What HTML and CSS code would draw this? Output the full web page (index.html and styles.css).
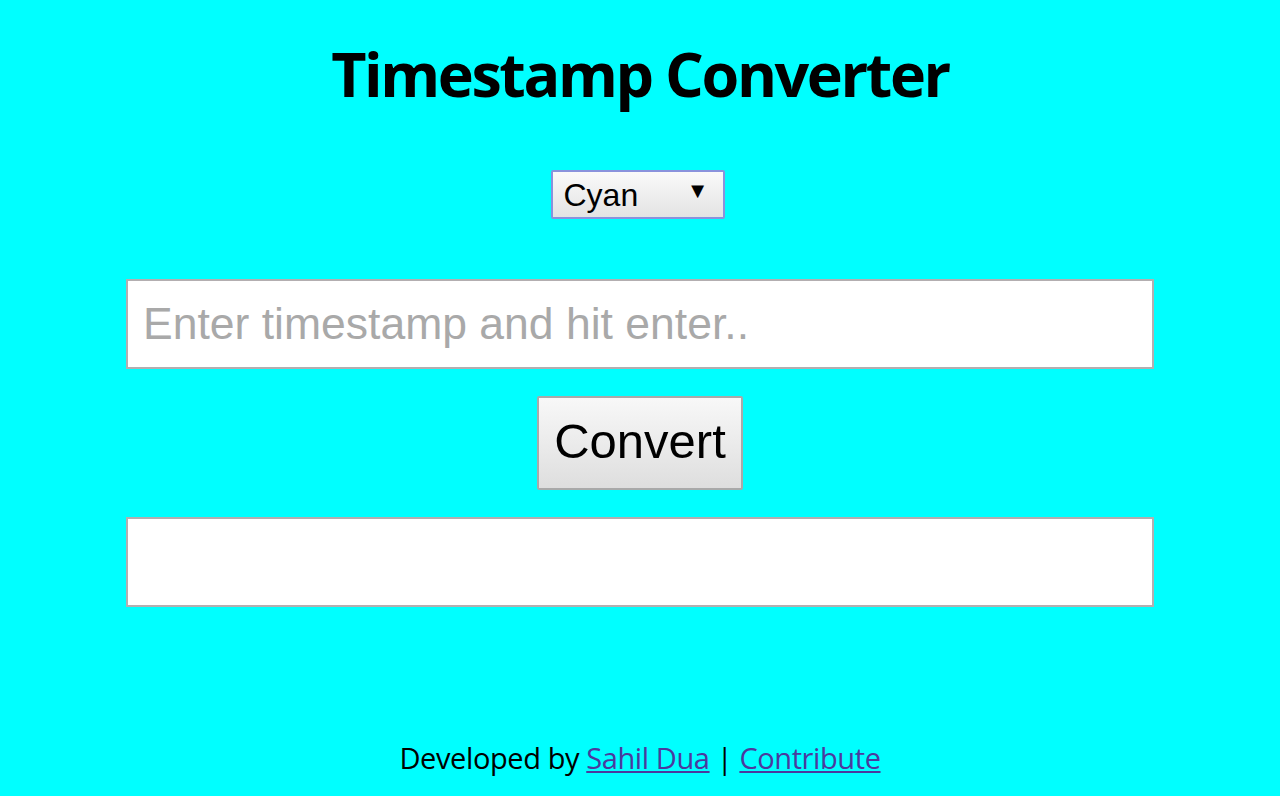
FILE: index.html
```html
<!DOCTYPE html>
<html lang="en">
<head>
<meta charset="utf-8">
<title>Timestamp Converter</title>
<link rel="stylesheet" href="styles.css">
</head>
<body>
<div class="page">
  <h1 class="title">Timestamp Converter</h1>
  <div class="theme">
    <div class="select"><span class="select-label">Cyan</span><span class="select-arrow">&#9660;</span></div>
  </div>
  <input class="field" type="text" placeholder="Enter timestamp and hit enter..">
  <button class="convert" type="button">Convert</button>
  <div class="field output"></div>
  <div class="spacer"></div>
  <footer class="footer">Developed by <a class="link" href="#">Sahil Dua</a> | <a class="link" href="#">Contribute</a></footer>
</div>
</body>
</html>
```

FILE: styles.css
```css
html {
  background: #ffffff;
}
body {
  margin: 0;
}
.page {
  height: 796px;
  background: #00ffff;
  display: flex;
  flex-direction: column;
  align-items: center;
  box-sizing: border-box;
  padding-top: 36px;
}
.title {
  margin: 0;
  font-family: "Open Sans", "Noto Sans", sans-serif;
  font-weight: 700;
  font-size: 61px;
  line-height: 76px;
  color: #000;
  letter-spacing: -2.4px;
}
.theme {
  margin-top: 58px;
  margin-right: 5px;
}
.select {
  width: 174px;
  height: 49px;
  box-sizing: border-box;
  border: 2px solid #8a92dc;
  border-radius: 2px;
  background: linear-gradient(#fafafa, #e3e3e3);
  display: flex;
  align-items: center;
  justify-content: space-between;
  padding: 0 14px 0 11px;
  font-family: "Liberation Sans", Arial, sans-serif;
  font-size: 32px;
  color: #000;
}
.select-label {
  margin-top: 2px;
}
.select-arrow {
  font-size: 22px;
  margin-top: -8px;
}
.field {
  margin-top: 60px;
  width: 1028px;
  height: 90px;
  box-sizing: border-box;
  border: 2px solid #b3aeb0;
  background: #fff;
  padding: 0 15px;
  font-family: "Liberation Sans", Arial, sans-serif;
  font-size: 44.5px;
  color: #000;
  outline: none;
}
.field::placeholder {
  color: #a9a9a9;
}
.convert {
  margin-top: 27px;
  width: 206px;
  height: 94px;
  box-sizing: border-box;
  border: 2px solid #a9a9a9;
  border-radius: 2px;
  background: linear-gradient(#f8f8f8, #dedede);
  font-family: "Liberation Sans", Arial, sans-serif;
  font-size: 49px;
  color: #000;
  padding: 0 0 4px;
}
.output {
  margin-top: 27px;
}
.spacer {
  flex: 1;
}
.footer {
  font-family: "Open Sans", "Noto Sans", sans-serif;
  font-size: 29px;
  line-height: 36px;
  color: #000;
  margin-bottom: 20px;
  letter-spacing: -0.4px;
}
.link {
  color: #4b3a9e;
  text-decoration: underline;
}
```
